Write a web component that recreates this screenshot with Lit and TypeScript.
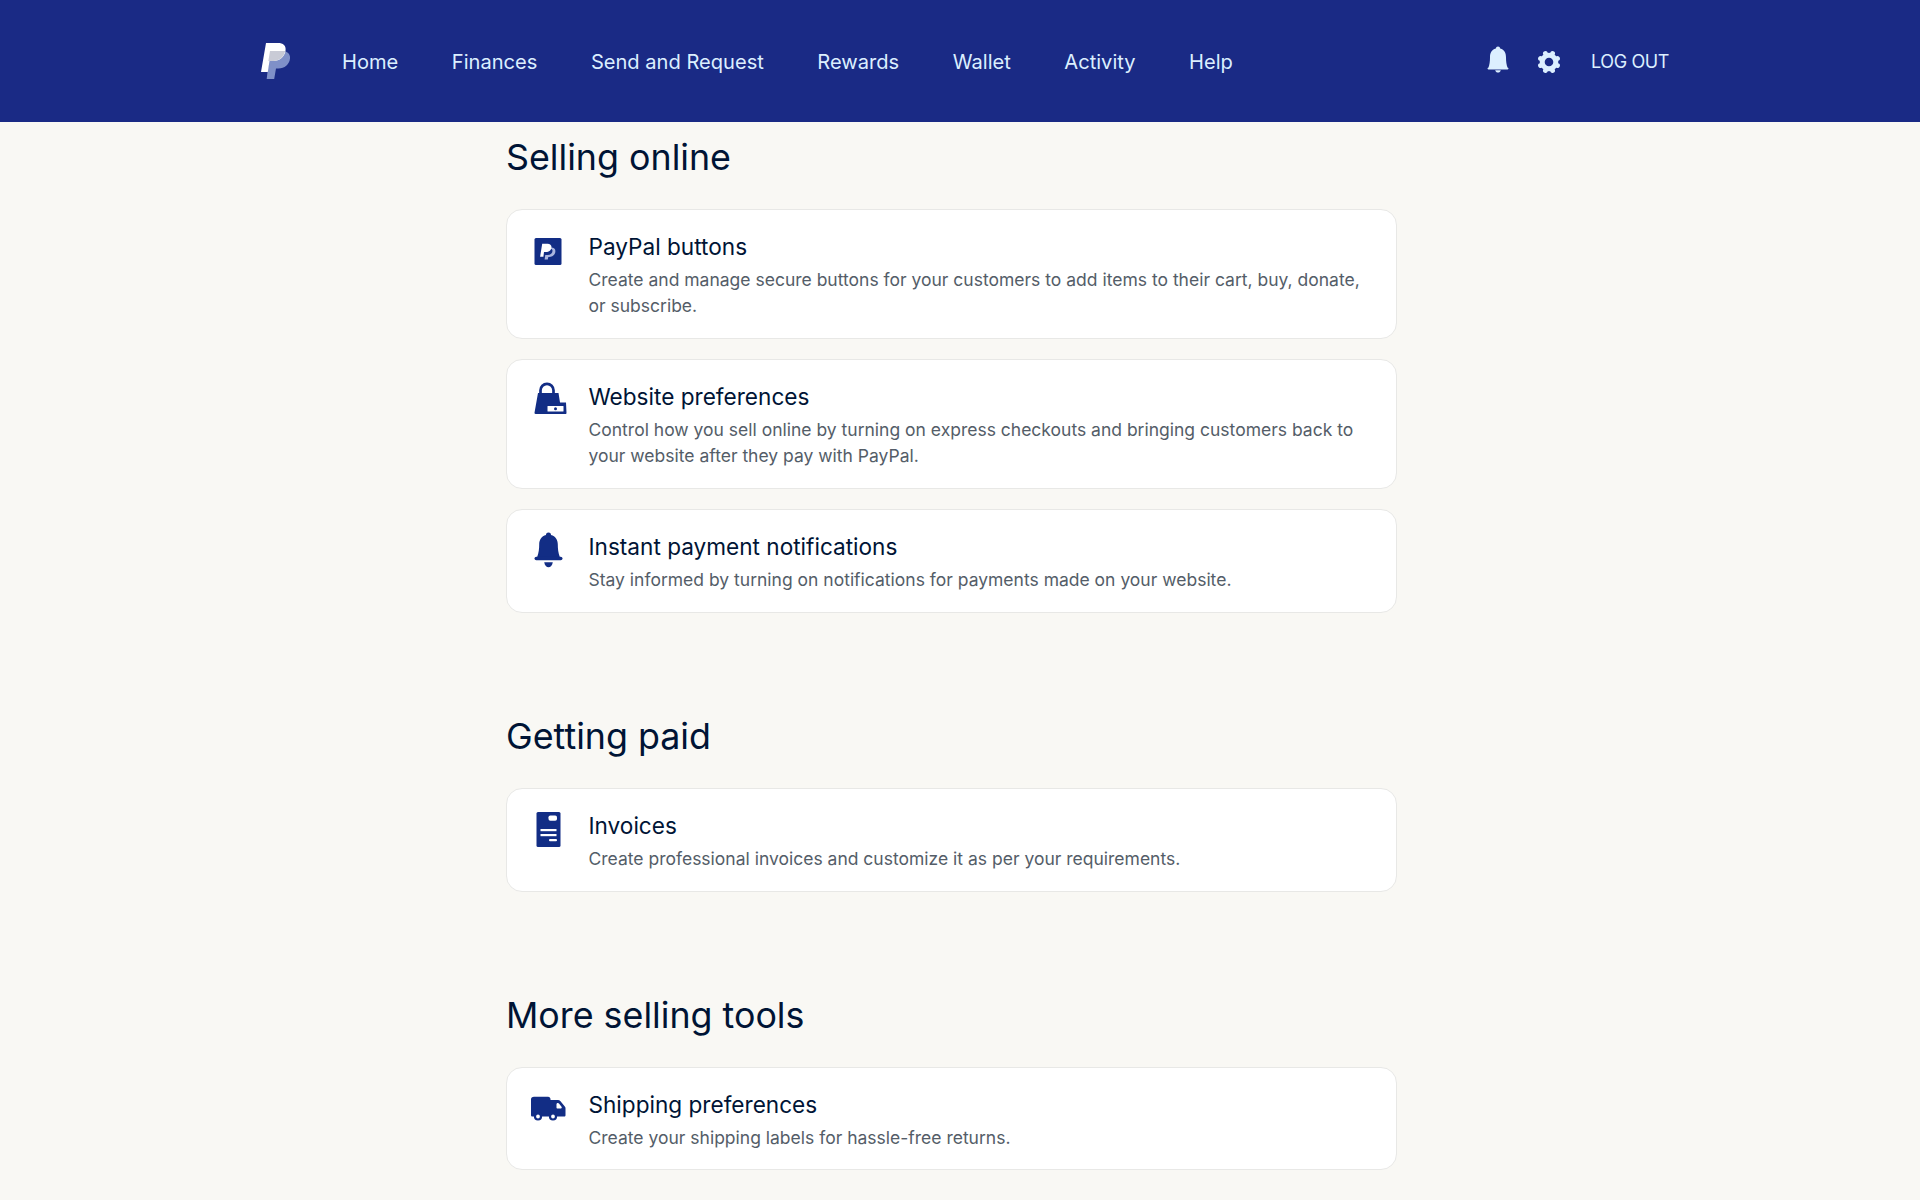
import { LitElement, html, css, svg } from "lit";
import { customElement } from "lit/decorators.js";

const icons: Record<string, unknown> = {
  pp: svg`<rect x="5.500" y="6" width="27" height="27" rx="1.500" fill="#122d85"/>
    <path d="M18.800 27.500h-3.200l.7-4.600h2.200c3 0 5-1.500 5-4.200 0-1.200-.9-2-2.400-2h-1.200l.8-1.300h1.500c2.700 0 4.200 1.300 4.200 3.500 0 3.700-2.800 6-6.400 6h-.7z" fill="#aab5de"/>
    <path d="M14.400 24.700h-3.300l2.100-13h5.300c2.500 0 4 1.300 4 3.200 0 3.100-2.500 5-5.600 5h-1.900z" fill="#fff"/>`,
  bag: svg`<path d="M11.500 11.500V8.300a6.500 6.500 0 0 1 13 0v3.200" fill="none" stroke="#122d85" stroke-width="2.700"/>
    <path d="M9 11h20.500l1.500 9.500h6l.5 10.500c0 .6-.4 1-1 1H6.500c-.7 0-1.100-.5-1-1.200z" fill="#122d85"/>
    <rect x="18.500" y="24" width="16" height="5.500" rx=".5" fill="#fff"/>
    <circle cx="26.500" cy="26.700" r="1.500" fill="#122d85"/>`,
  bell: svg`<path d="M19.500 .5a2.500 2.500 0 0 1 2.500 2.600c4.500 1.200 6.800 4.800 6.800 9.400 0 4.200.4 8.200 2 12.500H8.200c1.600-4.300 2-8.300 2-12.500 0-4.600 2.300-8.200 6.800-9.400A2.500 2.500 0 0 1 19.500 .5z" fill="#122d85"/>
    <rect x="5.500" y="24.700" width="28" height="3.600" rx="1.800" fill="#122d85"/>
    <path d="M15.200 30.300h8.600c-.6 3.200-2.300 5-4.300 5s-3.700-1.800-4.300-5z" fill="#122d85"/>`,
  inv: svg`<rect x="7.500" y="1" width="24" height="35" rx="1.500" fill="#122d85"/>
    <rect x="19.500" y="4.500" width="8.500" height="5.200" rx="1.800" fill="#fff"/>
    <rect x="11.500" y="18" width="16" height="2.200" fill="#fff"/>
    <rect x="11.500" y="23" width="16" height="2.200" fill="#fff"/>
    <rect x="20" y="28" width="8" height="2.200" rx="1" fill="#fff"/>`,
  truck: svg`<path d="M2 9.500C2 7.500 3 6.700 5 6.700h14c1.500 0 2.500 1 2.500 2.500V10H29c1 0 1.700.4 2.300 1.100l4.500 5.300c.5.500.7 1.100.7 1.800v7c0 .8-.5 1.300-1.300 1.300H3.500c-1 0-1.500-.5-1.500-1.500z" fill="#122d85"/>
    <path d="M27.500 14.500c0-1 .5-1.500 1.300-1.500.6 0 1 .2 1.400.7l2.300 3.100c.5.800.2 1.700-.7 1.700h-3.300c-.6 0-1-.4-1-1z" fill="#fff"/>
    <circle cx="9" cy="26.500" r="3" fill="#fff" stroke="#122d85" stroke-width="2.200"/>
    <circle cx="24" cy="26.500" r="3" fill="#fff" stroke="#122d85" stroke-width="2.200"/>`,
};

const sections = [
  {
    title: "Selling online",
    items: [
      ["pp", "PayPal buttons", "Create and manage secure buttons for your customers to add items to their cart, buy, donate, or subscribe."],
      ["bag", "Website preferences", "Control how you sell online by turning on express checkouts and bringing customers back to your website after they pay with PayPal."],
      ["bell", "Instant payment notifications", "Stay informed by turning on notifications for payments made on your website."],
    ],
  },
  {
    title: "Getting paid",
    items: [["inv", "Invoices", "Create professional invoices and customize it as per your requirements."]],
  },
  {
    title: "More selling tools",
    items: [["truck", "Shipping preferences", "Create your shipping labels for hassle-free returns."]],
  },
];

const nav = ["Home", "Finances", "Send and Request", "Rewards", "Wallet", "Activity", "Help"];
const lobes = [0, 45, 90, 135, 180, 225, 270, 315];

@customElement("app-root")
export class AppRoot extends LitElement {
  static styles = css`
    :host {
      display: block;
      height: 1200px;
      overflow: hidden;
      background: #f9f8f4;
      font-family: Inter, "Liberation Sans", sans-serif;
    }
    header {
      height: 122px;
      box-sizing: border-box;
      background: #1a2a85;
      display: flex;
      align-items: center;
      padding: 0 251px 0 261px;
      color: #dcefff;
    }
    .logo { width: 29px; height: 36px; margin-right: 52px; display: block; }
    nav { display: flex; gap: 53.500px; font-size: 20.100px; line-height: 24px; flex: 1; margin-top: 1px; }
    .tools { display: flex; align-items: center; }
    .bell { width: 26px; height: 30px; margin-right: 24.800px; margin-top: -2px; }
    .gear { width: 26px; height: 26px; margin-right: 29.500px; margin-top: 1.500px; }
    .logout { font-size: 18px; line-height: 24px; letter-spacing: -0.400px; margin-top: 1px; }
    main { padding: 13.300px 0 0 506px; width: 891px; }
    section { margin-bottom: 101px; }
    h2 {
      margin: 0 0 30px;
      font-size: 35.800px;
      line-height: 44px;
      font-weight: 400;
      color: #001435;
    }
    .cards { display: flex; flex-direction: column; gap: 20.500px; }
    .card {
      display: flex;
      gap: 20px;
      background: #fff;
      border: 1px solid #e8e8e6;
      border-radius: 16px;
      padding: 21px 21.500px 19px;
    }
    .ic { width: 40px; height: 40px; flex: none; margin-top: 1px; display: block; }
    h3 { margin: 0; font-size: 22.600px; line-height: 32px; font-weight: 400; color: #001435; }
    p { margin: 4px 0 0; font-size: 17.500px; line-height: 25.700px; color: #545d68; }
  `;

  render() {
    return html`
      <header>
        <svg class="logo" viewBox="0 0 29 36">
          <path d="M9 8h11.500c5.500 0 9 2.700 8.500 7.500-.6 6-5.500 10-11.500 10H15L13.200 36H5.700z" fill="#7f90c8"/>
          <path d="M5 0h12c5 0 8.500 2.600 7.500 8-1 6-6 10-12 10H8.500L6.800 29H0z" fill="#fff"/>
          <path d="M9 8h15.200c-1.200 5.800-6 10-11.700 10H7.400z" fill="#c9cbd6"/>
        </svg>
        <nav>${nav.map((n) => html`<span>${n}</span>`)}</nav>
        <div class="tools">
          <svg class="bell" viewBox="0 0 26 30">
            <path d="M13 1.500a2.200 2.200 0 0 1 2.200 2C19.500 4.700 21 8 21 12.500c0 3.800.4 7.300 1.800 10.800H3.200C4.600 19.800 5 16.300 5 12.500 5 8 6.500 4.700 10.800 3.500a2.200 2.200 0 0 1 2.200-2z" fill="#dcefff"/>
            <rect x="2.500" y="22.800" width="21" height="1.600" rx=".8" fill="#dcefff"/>
            <path d="M10.200 25.300h5.600c-.4 1.500-1.500 2.300-2.800 2.300s-2.400-.8-2.800-2.300z" fill="#dcefff"/>
          </svg>
          <svg class="gear" viewBox="0 0 26 26">
            ${lobes.map(
              (a) => svg`<circle cx="13" cy="3.900" r="2.500" fill="#dcefff" transform="rotate(${a + 22.5} 13 13)"/>`
            )}
            <circle cx="13" cy="13" r="6.800" fill="none" stroke="#dcefff" stroke-width="5"/>
          </svg>
          <span class="logout">LOG OUT</span>
        </div>
      </header>
      <main>
        ${sections.map(
          (s) => html`
            <section>
              <h2>${s.title}</h2>
              <div class="cards">
                ${s.items.map(
                  ([ic, t, d]) => html`
                    <div class="card">
                      <svg class="ic" viewBox="0 0 40 40">${icons[ic]}</svg>
                      <div>
                        <h3>${t}</h3>
                        <p>${d}</p>
                      </div>
                    </div>
                  `
                )}
              </div>
            </section>
          `
        )}
      </main>
    `;
  }
}
